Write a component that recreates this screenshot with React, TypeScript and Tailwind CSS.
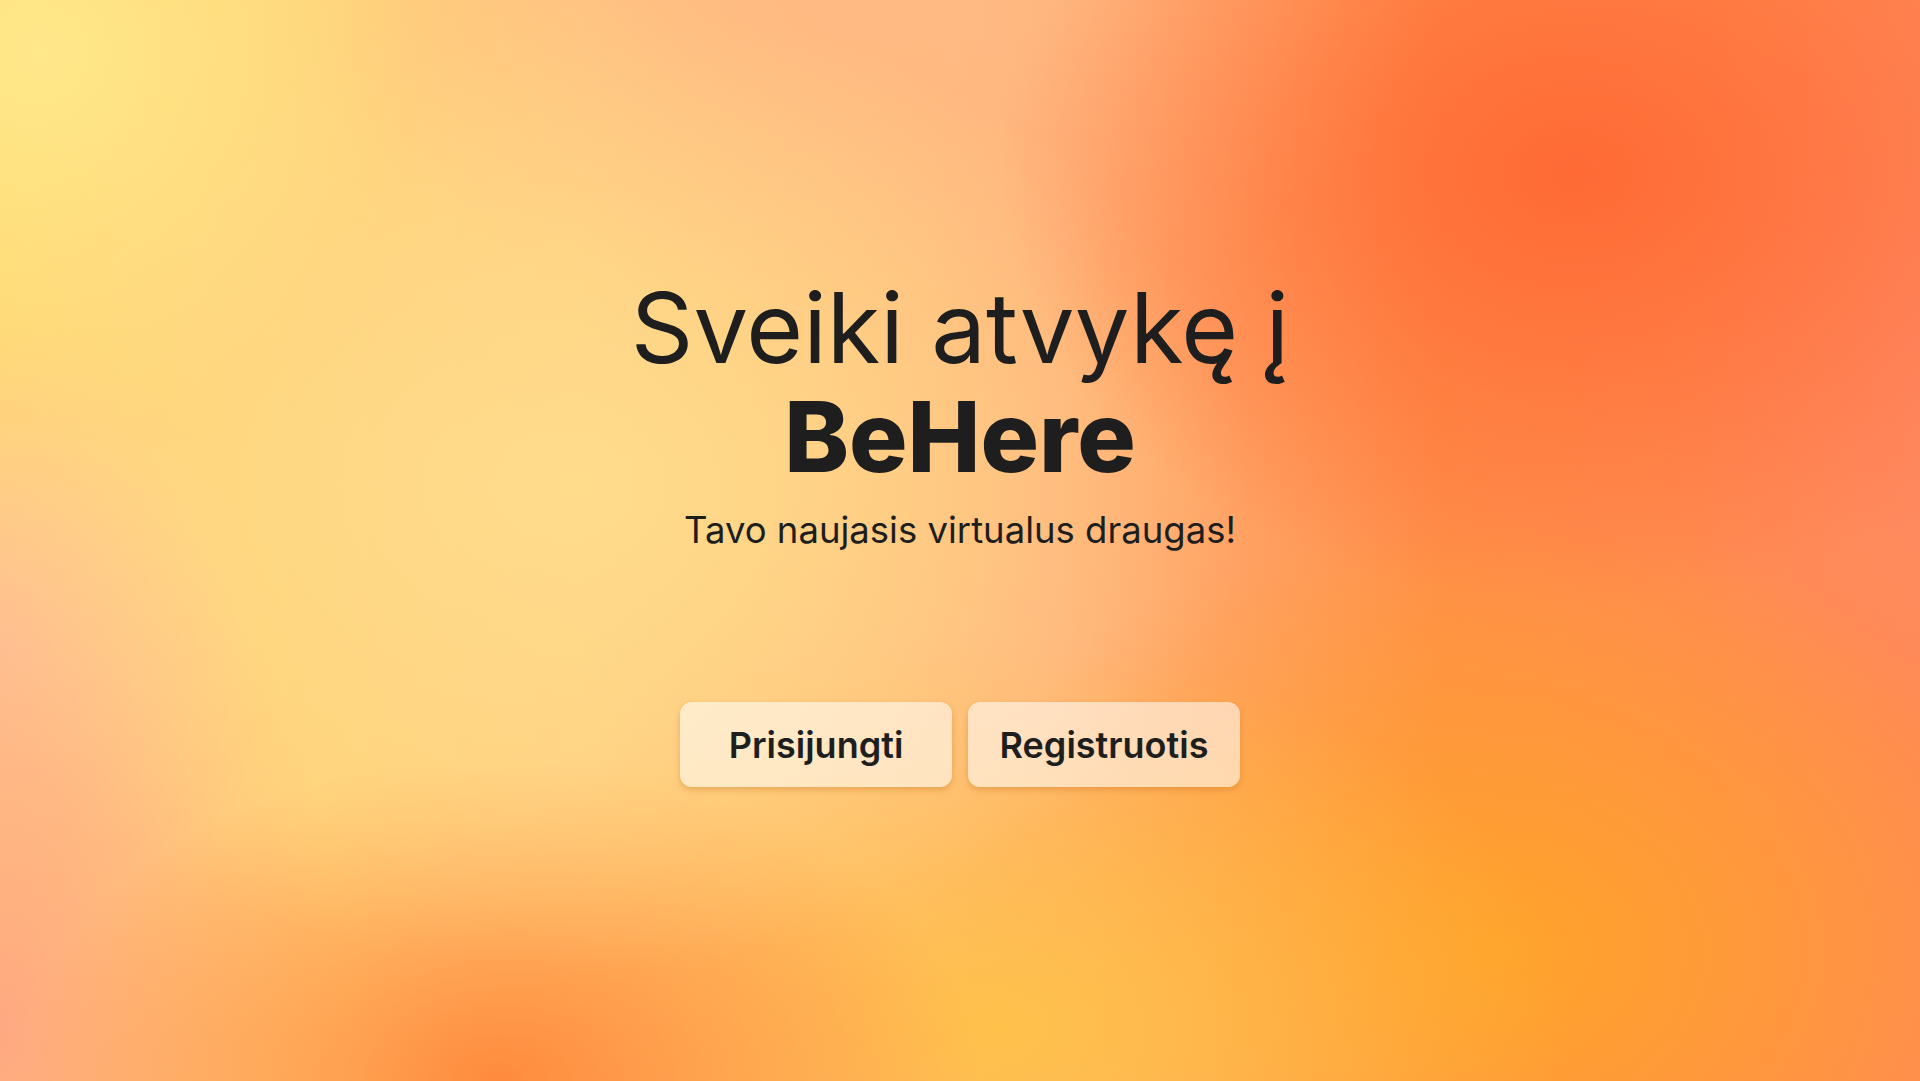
import React from "react";

const actions = ["Prisijungti", "Registruotis"];

export default function App() {
    return (
        <main
            className={
                "flex min-h-screen w-full flex-col items-center justify-center pb-[20px] text-[#1e1e1e] " +
                "font-['Inter','Noto_Sans',sans-serif] " +
                "bg-[radial-gradient(ellipse_30%_40%_at_82%_16%,#ff6a35_0%,rgba(255,106,53,0)_100%),radial-gradient(ellipse_35%_45%_at_30%_45%,#ffdc8c_0%,rgba(255,220,140,0)_100%),radial-gradient(ellipse_25%_30%_at_26%_100%,#ff8a3d_0%,rgba(255,138,61,0)_100%),radial-gradient(ellipse_30%_35%_at_52%_95%,#ffc14a_0%,rgba(255,193,74,0)_100%),radial-gradient(ellipse_30%_40%_at_78%_88%,#ffa32a_0%,rgba(255,163,42,0)_100%),radial-gradient(ellipse_18%_55%_at_0%_95%,#ffa882_0%,rgba(255,168,130,0)_100%),radial-gradient(ellipse_14%_30%_at_0%_60%,#ffc79a_0%,rgba(255,199,154,0)_100%),radial-gradient(ellipse_20%_35%_at_2%_5%,#ffe88a_0%,rgba(255,232,138,0)_100%),radial-gradient(ellipse_30%_30%_at_45%_0%,#ffb983_0%,rgba(255,185,131,0)_100%),radial-gradient(ellipse_15%_40%_at_100%_30%,#ff8a65_0%,rgba(255,138,101,0)_100%),linear-gradient(90deg,#ffd670_0%,#ffcf80_30%,#ffb27a_55%,#ff8f4a_75%,#ff8a55_100%)]"
            }
        >
            <h1 className="text-center text-[97.5px] leading-[109px] tracking-normal">
                <span className="block font-normal">Sveiki atvykę į</span>
                <span className="block font-extrabold">BeHere</span>
            </h1>
            <p className="mt-[18px] text-[36.5px] leading-10 font-normal">Tavo naujasis virtualus draugas!</p>

            <div className="mt-[152px] flex gap-4">
                {actions.map((label) => (
                    <button
                        key={label}
                        type="button"
                        className="flex h-[85px] w-[272px] items-center justify-center rounded-xl bg-white/55 text-4xl font-semibold shadow-[0_3px_6px_rgba(190,110,30,0.35)]"
                    >
                        {label}
                    </button>
                ))}
            </div>
        </main>
    );
}
